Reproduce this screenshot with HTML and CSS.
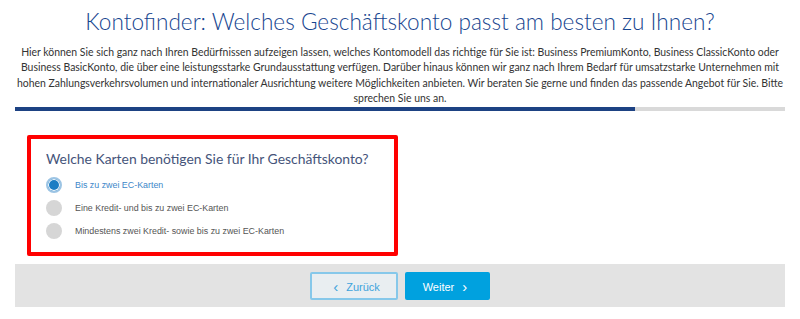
FILE: index.html
```html
<!DOCTYPE html>
<html>

<head>
    <meta http-equiv="content-type" content="text/html; charset=utf-8" />
    <title>Kontofinder</title>
    <link rel="stylesheet" href="styles.css">
</head>

<body>
    <section class="finder">
        <h1 class="finder-title">Kontofinder: Welches Geschäftskonto passt am besten zu Ihnen?</h1>
        <p class="finder-intro">Hier können Sie sich ganz nach Ihren Bedürfnissen aufzeigen lassen, welches Kontomodell das richtige für Sie ist: Business PremiumKonto, Business ClassicKonto oder<br>
            Business BasicKonto, die über eine leistungsstarke Grundausstattung verfügen. Darüber hinaus können wir ganz nach Ihrem Bedarf für umsatzstarke Unternehmen mit<br>
            hohen Zahlungsverkehrsvolumen und internationaler Ausrichtung weitere Möglichkeiten anbieten. Wir beraten Sie gerne und finden das passende Angebot für Sie. Bitte<br>
            sprechen Sie uns an.</p>

        <div class="progress">
            <div class="progress-fill" style="width: 80.5%"></div>
        </div>

        <!-- Frage -->
        <div class="question-box">
            <h2 class="question">Welche Karten benötigen Sie für Ihr Geschäftskonto?</h2>
            <label class="option active">
                <span class="radio"></span>
                Bis zu zwei EC-Karten
            </label>
            <label class="option">
                <span class="radio"></span>
                Eine Kredit- und bis zu zwei EC-Karten
            </label>
            <label class="option">
                <span class="radio"></span>
                Mindestens zwei Kredit- sowie bis zu zwei EC-Karten
            </label>
        </div>

        <div class="finder-nav">
            <button class="btn btn-back"><span class="chev">&#8249;</span> Zurück</button>
            <button class="btn btn-next">Weiter <span class="chev">&#8250;</span></button>
        </div>
    </section>
</body>

</html>
```

FILE: styles.css
```css
body {
    margin: 0;
    background: #fff;
    font-family: Lato, "Liberation Sans", sans-serif;
}

.finder {
    width: 770px;
    margin: 0 auto;
}

.finder-title {
    margin: 7px 0 0;
    font-size: 22.6px;
    font-weight: 300;
    line-height: 30px;
    color: #17458f;
    text-align: center;
}

.finder-intro {
    margin: 8px 0 0;
    font-size: 10.45px;
    line-height: 15.4px;
    color: #333;
    text-align: center;
    white-space: nowrap;
}

.progress {
    height: 4px;
    background: #d9d9d9;
}

.progress-fill {
    height: 100%;
    background: #1d4283;
}

/* Frage */
.question-box {
    width: 348px;
    height: 113px;
    margin: 24px 0 0 12px;
    padding: 0 0 0 15px;
    border: 4px solid #ff0000;
    border-radius: 2px;
    box-sizing: content-box;
}

.question {
    margin: 9px 0 4px;
    font-size: 13.9px;
    font-weight: 400;
    color: #45547a;
    line-height: 22px;
    white-space: nowrap;
}

.option {
    display: flex;
    align-items: center;
    gap: 13px;
    height: 23px;
    font-family: "Liberation Sans", sans-serif;
    font-size: 8.9px;
    color: #555;
}

.radio {
    width: 16px;
    height: 16px;
    border-radius: 50%;
    background: #d6d6d6;
    box-sizing: border-box;
}

.option.active {
    color: #3d87c9;
}

.option.active .radio {
    background: #1b7dc4;
    border: 2px solid #9cc4e4;
    box-shadow: inset 0 0 0 1px #fff;
}

.finder-nav {
    display: flex;
    justify-content: center;
    gap: 7px;
    height: 43px;
    margin-top: 8px;
    padding-top: 8px;
    box-sizing: border-box;
    background: #e3e3e3;
}

.btn {
    height: 28px;
    padding: 0;
    border-radius: 2px;
    font-family: "Liberation Sans", sans-serif;
    font-size: 11px;
    cursor: pointer;
}

.btn-back {
    width: 88px;
    background: #e9eef1;
    border: 2px solid #86c8ea;
    color: #3ea3dc;
}

.btn-next {
    width: 85px;
    background: #00a1df;
    border: none;
    color: #fff;
}

.chev {
    font-size: 15px;
    margin: 0 5px;
    position: relative;
    top: 1px;
}
```
